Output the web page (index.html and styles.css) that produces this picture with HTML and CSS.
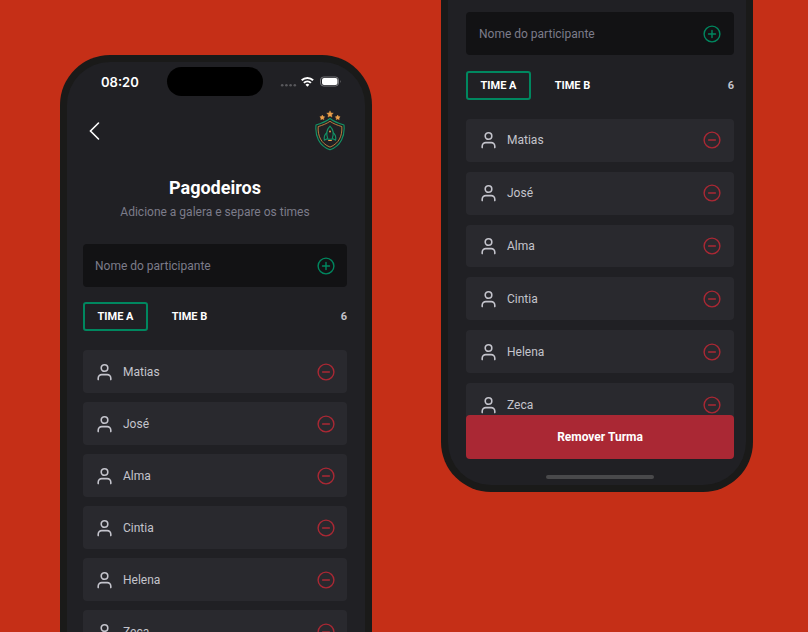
FILE: index.html
```html
<!DOCTYPE html>
<html lang="pt-BR">
<head>
<meta charset="utf-8">
<meta name="viewport" content="width=device-width, initial-scale=1">
<title>Pagodeiros</title>
<link rel="stylesheet" href="styles.css">
</head>
<body>
<svg class="sprite" aria-hidden="true">
  <symbol id="user" viewBox="0 0 16 18"><circle cx="7.500" cy="5" r="3.300"/><path d="M1.200 16.600v-1.400a3.600 3.600 0 0 1 3.600-3.600h5.400a3.600 3.600 0 0 1 3.600 3.600v1.400"/></symbol>
  <symbol id="plus" viewBox="0 0 18 18"><circle cx="9" cy="9" r="7.900"/><path d="M5.500 9h7M9 5.500v7"/></symbol>
  <symbol id="minus" viewBox="0 0 18 18"><circle cx="9" cy="9" r="7.900"/><path d="M5.600 9h6.800"/></symbol>
</svg>
<main class="stage">
  <section class="phone phone-top">
    <div class="screen">
      <div class="status">
        <span class="clock">08:20</span>
        <span class="island"></span>
        <svg class="signals" viewBox="0 0 62 14" aria-hidden="true">
          <g fill="#58585c"><circle cx="2.2" cy="10.3" r="1.3"/><circle cx="6.4" cy="10.3" r="1.3"/><circle cx="10.6" cy="10.3" r="1.3"/><circle cx="14.8" cy="10.3" r="1.3"/></g>
          <g fill="none" stroke="#fff" stroke-width="2"><path d="M21.7 5.3a8.2 8.2 0 0 1 11.4 0"/><path d="M23.900 7.900a5 5 0 0 1 7 0"/></g>
          <path d="M25.500 9.700a2.800 2.800 0 0 1 3.800 0l-1.900 2.100z" fill="#fff"/>
          <rect x="40.5" y="2" width="18" height="9" rx="3" fill="none" stroke="#77777b"/>
          <rect x="42" y="3" width="15.5" height="7" rx="2" fill="#fff"/>
          <path d="M60 5q1.4 1.500 0 3z" fill="#77777b"/>
        </svg>
      </div>
      <header class="topbar">
        <button class="icon-button back" aria-label="Voltar"><svg viewBox="0 0 12 20"><path d="M9.500 2 1.500 10l8 8"/></svg></button>
        <svg class="crest" viewBox="0 0 30 42" role="img" aria-label="Brasão">
          <g fill="#eba04a"><path d="m15 .8 1 2.100 2.300.3-1.700 1.600.4 2.300-2-1.100-2 1.100.4-2.300-1.700-1.600 2.300-.3z" stroke="#eba04a" stroke-width=".4"/><path d="m7.300 5.100.8 1.400 1.600.3-1.100 1.200.2 1.600-1.500-.7-1.500.7.200-1.600-1.100-1.200 1.600-.3z" stroke="#eba04a" stroke-width=".5"/><path d="m22.700 5.100.8 1.400 1.600.3-1.100 1.200.2 1.600-1.500-.7-1.500.7.200-1.600-1.100-1.200 1.600-.3z" stroke="#eba04a" stroke-width=".5"/></g>
          <g fill="none" stroke="#129466" stroke-width="1.100">
            <path d="M15 8.500c3.500 2.800 8.500 4.800 14 6.600 1.100 10.700-3 20.700-14 24.700C4 35.800-.1 25.800 1 15.100c5.500-1.800 10.500-3.800 14-6.600z"/>
            <path d="M15 16.200c-3.400 3.400-4.100 8-2.100 13h4.200c2-5 1.300-9.600-2.100-13z"/>
            <path d="M12 22.500c-2.400 1.900-3.200 4.500-2.600 7.700l3.200-1.700M18 22.500c2.400 1.900 3.200 4.500 2.600 7.700l-3.200-1.700"/>
          </g>
          <path d="M15 11.300c3.200 2.300 7.100 3.800 11.800 5.300.6 9.300-2.800 16.900-11.800 20.500C6 33.500 2.600 25.900 3.200 16.600 7.900 15.100 11.800 13.600 15 11.300z" fill="none" stroke="#c88841" stroke-width=".9"/>
          <circle cx="15" cy="21.500" r=".9" fill="#eba04a"/><path d="M13.200 30.500h3.600" stroke="#eba04a"/>
        </svg>
      </header>
      <div class="heading">
        <h1>Pagodeiros</h1>
        <p>Adicione a galera e separe os times</p>
      </div>
      <form class="field"><input type="text" placeholder="Nome do participante" aria-label="Nome do participante"><button type="button" class="icon-button add" aria-label="Adicionar"><svg><use href="#plus"/></svg></button></form>
      <div class="tabs"><button class="tab active">TIME A</button><button class="tab">TIME B</button><span class="count">6</span></div>
      <ul class="players">
        <li><svg class="user"><use href="#user"/></svg><span>Matias</span><button class="icon-button remove" aria-label="Remover Matias"><svg><use href="#minus"/></svg></button></li>
        <li><svg class="user"><use href="#user"/></svg><span>José</span><button class="icon-button remove" aria-label="Remover José"><svg><use href="#minus"/></svg></button></li>
        <li><svg class="user"><use href="#user"/></svg><span>Alma</span><button class="icon-button remove" aria-label="Remover Alma"><svg><use href="#minus"/></svg></button></li>
        <li><svg class="user"><use href="#user"/></svg><span>Cintia</span><button class="icon-button remove" aria-label="Remover Cintia"><svg><use href="#minus"/></svg></button></li>
        <li><svg class="user"><use href="#user"/></svg><span>Helena</span><button class="icon-button remove" aria-label="Remover Helena"><svg><use href="#minus"/></svg></button></li>
        <li><svg class="user"><use href="#user"/></svg><span>Zeca</span><button class="icon-button remove" aria-label="Remover Zeca"><svg><use href="#minus"/></svg></button></li>
      </ul>
    </div>
  </section>
  <section class="phone phone-bottom">
    <div class="screen">
      <form class="field"><input type="text" placeholder="Nome do participante" aria-label="Nome do participante"><button type="button" class="icon-button add" aria-label="Adicionar"><svg><use href="#plus"/></svg></button></form>
      <div class="tabs"><button class="tab active">TIME A</button><button class="tab">TIME B</button><span class="count">6</span></div>
      <ul class="players">
        <li><svg class="user"><use href="#user"/></svg><span>Matias</span><button class="icon-button remove" aria-label="Remover Matias"><svg><use href="#minus"/></svg></button></li>
        <li><svg class="user"><use href="#user"/></svg><span>José</span><button class="icon-button remove" aria-label="Remover José"><svg><use href="#minus"/></svg></button></li>
        <li><svg class="user"><use href="#user"/></svg><span>Alma</span><button class="icon-button remove" aria-label="Remover Alma"><svg><use href="#minus"/></svg></button></li>
        <li><svg class="user"><use href="#user"/></svg><span>Cintia</span><button class="icon-button remove" aria-label="Remover Cintia"><svg><use href="#minus"/></svg></button></li>
        <li><svg class="user"><use href="#user"/></svg><span>Helena</span><button class="icon-button remove" aria-label="Remover Helena"><svg><use href="#minus"/></svg></button></li>
        <li><svg class="user"><use href="#user"/></svg><span>Zeca</span><button class="icon-button remove" aria-label="Remover Zeca"><svg><use href="#minus"/></svg></button></li>
      </ul>
      <button class="danger">Remover Turma</button>
      <div class="home-bar"></div>
    </div>
  </section>
</main>
</body>
</html>
```
FILE: styles.css
```css
* { box-sizing: border-box; }
body { margin: 0; background: #c52f17; font-family: Roboto, "Liberation Sans", sans-serif; font-size: 12px; color: #c4c4cc; }
h1, p, ul { margin: 0; padding: 0; }
button, input { font: inherit; border: 0; background: none; padding: 0; }
svg { display: block; flex: none; }
.sprite { position: absolute; width: 0; height: 0; }

.stage { display: grid; grid-template-columns: 312fr 312fr; column-gap: 69px; align-items: start; height: 100vh; padding: 0 55px 0 60px; overflow: hidden; }
.phone { background: #1a1a19; padding: 7px; }
.phone-top { margin-top: 55px; border-radius: 50px 50px 0 0; }
.phone-bottom { padding-top: 0; border-radius: 0 0 50px 50px; }
.screen { background: #202024; }
.phone-top .screen { border-radius: 43px 43px 0 0; padding: 5px 18px 16px 16px; }
.phone-bottom .screen { border-radius: 0 0 43px 43px; padding: 12px 12px 6px 18px; }

.status { display: grid; grid-template-columns: 1fr 96px 1fr; align-items: center; height: 29px; }
.clock { padding-left: 18px; font-family: Inter, sans-serif; font-weight: 600; font-size: 13px; line-height: 16px; color: #fff; }
.island { height: 29px; border-radius: 15px; background: #000; }
.signals { width: 62px; height: 14px; justify-self: end; margin-right: 5px; }

.topbar { display: flex; justify-content: space-between; align-items: center; height: 42px; margin-top: 14px; padding: 0 2px 0 6px; }
.icon-button { display: block; flex: none; cursor: pointer; }
.icon-button svg { width: 18px; height: 18px; fill: none; stroke: currentColor; stroke-width: 1.4; stroke-linecap: round; }
.back { color: #fff; }
.back svg { width: 12px; height: 20px; stroke-width: 1.6; }
.crest { width: 30px; height: 42px; }

.heading { text-align: center; margin: 24px 0 20px; }
.heading h1 { font-size: 18px; line-height: 24px; color: #fff; }
.heading p { line-height: 24px; color: #7c7c8a; }

.field { display: flex; align-items: center; height: 43px; padding: 0 12px; background: #121214; border-radius: 4px; }
.field input { flex: 1; min-width: 0; color: #c4c4cc; outline: 0; }
.field input::placeholder { color: #7c7c8a; opacity: 1; }
.add { color: #00875f; }

.tabs { display: flex; align-items: center; gap: 9px; margin: 15px 0 19px; }
.tab { width: 65px; height: 29px; border-radius: 3px; font-size: 11px; font-weight: 700; color: #fff; cursor: pointer; }
.tab.active { border: 2px solid #00875f; }
.count { margin-left: auto; font-size: 11px; font-weight: 700; }

.players { display: flex; flex-direction: column; gap: 9px; list-style: none; }
.players li { display: flex; align-items: center; height: 43px; padding: 0 12px 0 14px; background: #29292e; border-radius: 4px; }
.user { width: 16px; height: 18px; margin-right: 10px; fill: none; stroke: #c4c4cc; stroke-width: 1.6; stroke-linecap: round; }
.players span { flex: 1; }
.remove { color: #aa2834; }

.phone-bottom .field { padding: 0 13px; }
.phone-bottom .tabs { margin-top: 16px; }
.phone-bottom .players { height: 307px; gap: 10px; }
.phone-bottom .players li { flex: 1; height: auto; padding: 0 13px 0 15px; }
.danger { position: relative; display: block; width: 100%; height: 44px; margin-top: -11px; border-radius: 4px; background: #aa2834; color: #fff; font-weight: 700; font-size: 12px; cursor: pointer; }
.home-bar { width: 108px; height: 4px; margin: 16px auto 0; border-radius: 2px; background: #49494b; }
```
